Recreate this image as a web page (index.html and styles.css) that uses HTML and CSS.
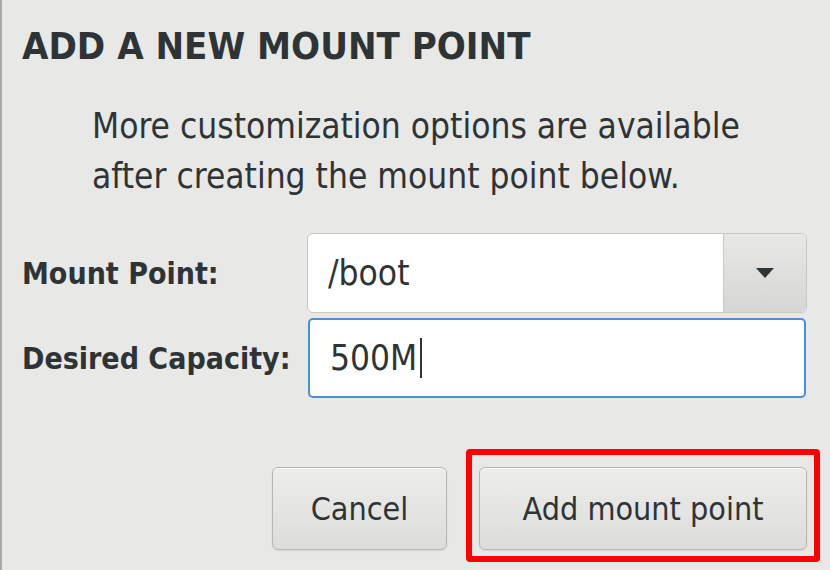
FILE: index.html
```html
<!DOCTYPE html>
<html>
<head>
<meta charset="utf-8">
<link rel="stylesheet" href="styles.css">
</head>
<body>
<div class="dialog">
  <h1 class="title">ADD A NEW MOUNT POINT</h1>
  <p class="note">More customization options are available<br>after creating the mount point below.</p>
  <div class="form">
    <label class="label">Mount Point:</label>
    <div class="combo">
      <span class="combo-text">/boot</span>
      <span class="combo-btn">
        <svg width="20" height="12" viewBox="0 0 20 12"><path d="M1 1 H19 L10 11 Z" fill="#2e3436"/></svg>
      </span>
    </div>
    <label class="label">Desired Capacity:</label>
    <div class="entry"><span class="entry-text">500M</span><span class="caret"></span></div>
  </div>
  <div class="actions">
    <button class="btn btn-cancel">Cancel</button>
    <button class="btn btn-add">Add mount point<span class="highlight"></span></button>
  </div>
</div>
</body>
</html>
```
FILE: styles.css
```css
html, body {
  margin: 0;
  padding: 0;
  width: 830px;
  height: 570px;
  overflow: hidden;
  background: #e8e8e7;
}
.dialog {
  box-sizing: border-box;
  width: 830px;
  height: 570px;
  border-left: 2px solid #a8a8a6;
  padding: 0 23px 0 20px;
  display: flex;
  flex-direction: column;
  color: #2e3436;
  font-family: "DejaVu Sans", sans-serif;
  font-stretch: condensed;
}
.title {
  margin: 24px 0 0 0;
  font-family: "DejaVu Sans", sans-serif;
  font-stretch: condensed;
  font-weight: bold;
  font-size: 38px;
  line-height: 44px;
  white-space: nowrap;
}
.note {
  margin: 33px 0 0 70px;
  font-size: 35px;
  line-height: 50px;
  white-space: nowrap;
}
.form {
  margin-top: 32px;
  display: grid;
  grid-template-columns: 285px 500px;
  grid-auto-rows: 80px;
  row-gap: 5px;
  align-items: center;
}
.label {
  font-weight: bold;
  font-size: 30px;
  white-space: nowrap;
}
.combo {
  box-sizing: border-box;
  height: 80px;
  border: 1px solid #c8c8c5;
  border-radius: 6px;
  background: #fff;
  display: flex;
  align-items: stretch;
  overflow: hidden;
}
.combo-text {
  flex: 1;
  display: flex;
  align-items: center;
  padding-left: 20px;
  font-size: 35px;
}
.combo-btn {
  width: 82px;
  border-left: 1px solid #c8c8c5;
  background: linear-gradient(#e8e8e7, #d6d6d4);
  display: flex;
  align-items: center;
  justify-content: center;
}
.entry {
  box-sizing: border-box;
  height: 80px;
  margin-left: 1px;
  width: 498px;
  border: 2px solid #4a90d9;
  border-radius: 5px;
  background: #fff;
  display: flex;
  align-items: center;
  padding-left: 20px;
  font-size: 35px;
}
.caret {
  display: inline-block;
  width: 2px;
  height: 40px;
  background: #2e3436;
  margin-left: 3px;
}
.actions {
  margin-top: 69px;
  display: flex;
  justify-content: flex-end;
  gap: 32px;
}
.btn {
  position: relative;
  box-sizing: border-box;
  height: 83px;
  border: 1px solid #b6b6b3;
  border-radius: 6px;
  background: linear-gradient(#ededec, #dcdcda);
  box-shadow: 0 1px 0 rgba(255,255,255,0.8) inset, 0 1px 2px rgba(0,0,0,0.08);
  color: #2e3436;
  font-family: "DejaVu Sans", sans-serif;
  font-stretch: condensed;
  font-size: 32px;
  padding: 0;
  white-space: nowrap;
}
.btn-cancel {
  width: 175px;
}
.btn-add {
  width: 328px;
}
.highlight {
  position: absolute;
  left: -14px;
  right: -14px;
  top: -19px;
  bottom: -13px;
  border: 6px solid #ff0000;
  border-radius: 4px;
  pointer-events: none;
}
```
